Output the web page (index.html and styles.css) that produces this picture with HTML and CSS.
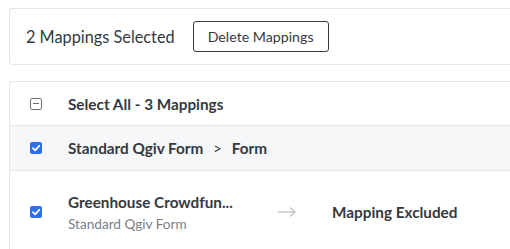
FILE: index.html
```html
<!DOCTYPE html>
<html lang="en">
<head>
    <meta charset="UTF-8">
    <meta name="viewport" content="width=device-width, initial-scale=1.0">
    <title>Mappings</title>
    <link rel="stylesheet" href="styles.css">
</head>
<body>
    <div class="page">
        <div class="bulk-bar">
            <span class="bulk-count">2 Mappings Selected</span>
            <button type="button" class="outline-button">Delete Mappings</button>
        </div>

        <div class="mapping-list">
            <div class="list-row select-all">
                <span class="check check-partial"></span>
                <span class="row-title">Select All - 3 Mappings</span>
            </div>
            <div class="list-row group-row">
                <span class="check check-on">
                    <svg viewBox="0 0 12 12" width="12" height="12"><path d="M3 6.2 L5.1 8.3 L9.2 3.8" fill="none" stroke="#fff" stroke-width="1.8" stroke-linecap="round" stroke-linejoin="round"/></svg>
                </span>
                <span class="row-title">Standard Qgiv Form <span class="crumb-sep">&gt;</span> Form</span>
            </div>
            <div class="list-row item-row">
                <span class="check check-on">
                    <svg viewBox="0 0 12 12" width="12" height="12"><path d="M3 6.2 L5.1 8.3 L9.2 3.8" fill="none" stroke="#fff" stroke-width="1.8" stroke-linecap="round" stroke-linejoin="round"/></svg>
                </span>
                <div class="item-source">
                    <div class="row-title">Greenhouse Crowdfun...</div>
                    <div class="item-sub">Standard Qgiv Form</div>
                </div>
                <svg class="item-arrow" viewBox="0 0 20 12" width="20" height="12"><path d="M1 6 H18 M13 1.5 L18 6 L13 10.5" fill="none" stroke="#c6cace" stroke-width="1.5"/></svg>
                <span class="row-title">Mapping Excluded</span>
            </div>
        </div>
    </div>
</body>
</html>
```

FILE: styles.css
```css
html, body {
    margin: 0;
    overflow: hidden;
}
body {
    font-family: Lato, "Liberation Sans", sans-serif;
    color: #343a40;
    background-color: white;
}
.page {
    padding: 8px 0 0 9px;
}
.bulk-bar {
    display: flex;
    align-items: center;
    height: 55px;
    padding-left: 16px;
    border: 1px solid #e6e6e6;
    border-right: none;
    border-radius: 3px 0 0 3px;
}
.bulk-count {
    font-size: 16.3px;
    margin-right: 18px;
}
.outline-button {
    font-family: inherit;
    font-size: 14.2px;
    color: #343a40;
    background-color: white;
    width: 136px;
    height: 31px;
    border: 1px solid #343a40;
    border-radius: 3px;
    padding: 0;
}
.mapping-list {
    margin-top: 16px;
    border: 1px solid #e6e6e6;
    border-right: none;
    border-bottom: none;
    border-radius: 3px 0 0 0;
}
.list-row {
    display: flex;
    align-items: center;
    padding-left: 20px;
}
.select-all {
    height: 43px;
}
.group-row {
    height: 44px;
    background-color: #f6f7f9;
    border-top: 1px solid #e6e6e6;
    border-bottom: 1px solid #e6e6e6;
}
.item-row {
    height: 82px;
}
.check {
    flex-shrink: 0;
    width: 12px;
    height: 12px;
    border-radius: 2px;
    margin-right: 26px;
    box-sizing: border-box;
    display: flex;
}
.check-partial {
    border: 1px solid #6c6f73;
    position: relative;
}
.check-partial::after {
    content: "";
    position: absolute;
    left: 2px;
    right: 2px;
    top: 4px;
    height: 1px;
    background-color: #6c6f73;
}
.check-on {
    background-color: #2f6ff0;
}
.row-title {
    font-size: 15.3px;
    font-weight: bold;
    color: #343a40;
    white-space: nowrap;
}
.crumb-sep {
    font-weight: normal;
    margin: 0 6px;
}
.item-source {
    width: 170px;
}
.item-sub {
    font-size: 13.6px;
    color: #7a7f86;
    margin-top: 5px;
}
.item-arrow {
    margin-left: 39px;
    margin-right: 35px;
}
```
